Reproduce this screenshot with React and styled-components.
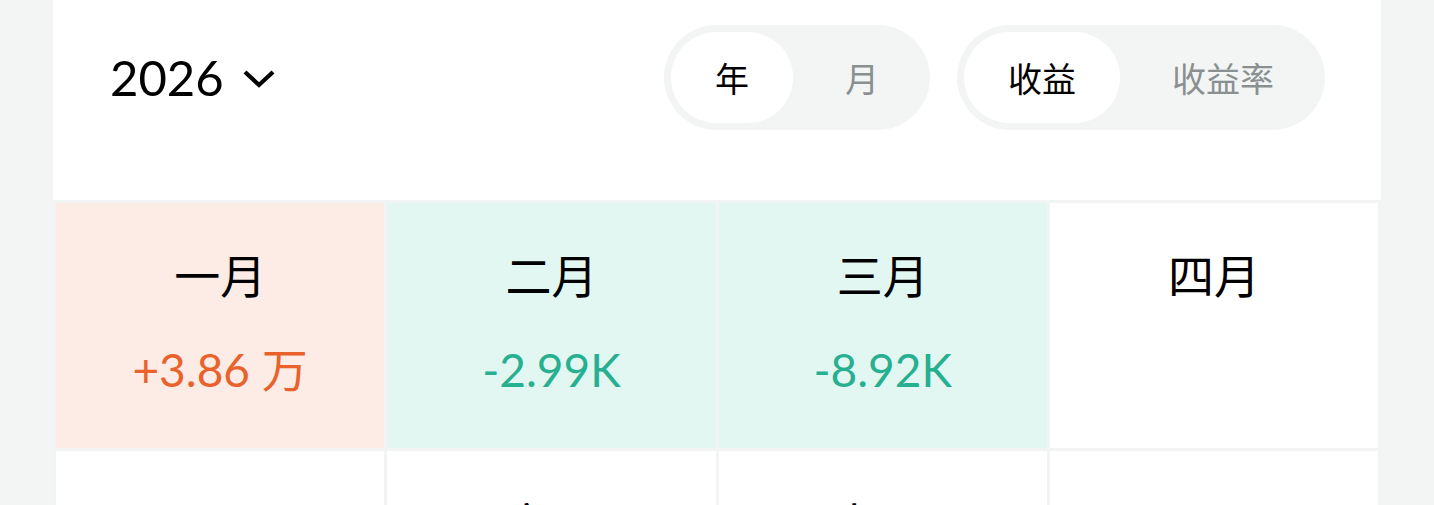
import React, { useState } from 'react'
import styled, { createGlobalStyle } from 'styled-components';

const months = [
  { name: '一月', value: '+3.86 万', tone: 'up' },
  { name: '二月', value: '-2.99K', tone: 'down' },
  { name: '三月', value: '-8.92K', tone: 'down' },
  { name: '四月' },
  { name: '五月' },
  { name: '六月' },
  { name: '七月' },
  { name: '八月' },
];

const ChevronDown = () => (
  <svg width="34" height="24" viewBox="0 0 34 24" fill="none">
    <path d="M3 5 L17 18 L31 5" stroke="#000" strokeWidth="4.2" strokeLinecap="butt" strokeLinejoin="miter" />
  </svg>
);

const Segmented = ({ options, active, onChange }) => (
  <Pill>
    {options.map((o) => (
      <Segment key={o} $active={o === active} onClick={() => onChange(o)}>
        {o}
      </Segment>
    ))}
  </Pill>
);

const App = () => {
  const [period, setPeriod] = useState('年');
  const [mode, setMode] = useState('收益');

  return (
    <Page>
      <GlobalStyle />
      <Card>
        <Header>
          <YearPicker>
            2026
            <ChevronDown />
          </YearPicker>
          <Toggles>
            <Segmented options={['年', '月']} active={period} onChange={setPeriod} />
            <Segmented options={['收益', '收益率']} active={mode} onChange={setMode} />
          </Toggles>
        </Header>
        <MonthGrid>
          {months.map((m) => (
            <MonthCell key={m.name} $tone={m.tone}>
              <MonthName>{m.name}</MonthName>
              {m.value && <MonthValue $tone={m.tone}>{m.value}</MonthValue>}
            </MonthCell>
          ))}
        </MonthGrid>
      </Card>
    </Page>
  )
}

export default App

const GlobalStyle = createGlobalStyle`
  body {
    margin: 0;
    background: #f3f5f4;
    font-family: Lato, "Noto Sans CJK SC", sans-serif;
  }
`

const Page = styled.div`
  padding: 0 53px;
  height: 505px;
  overflow: hidden;
`

const Card = styled.div`
  background: #fff;
  width: 1328px;
`

const Header = styled.div`
  display: flex;
  align-items: center;
  justify-content: space-between;
  padding: 25px 56px 70px 57px;
`

const YearPicker = styled.div`
  display: flex;
  align-items: center;
  gap: 18px;
  font-family: Lato, sans-serif;
  font-size: 49px;
  color: #000;
  line-height: 1;
  svg { margin-top: 2px; }
`

const Toggles = styled.div`
  display: flex;
  gap: 27px;
`

const Pill = styled.div`
  display: flex;
  gap: 8px;
  padding: 7px;
  height: 105px;
  box-sizing: border-box;
  border-radius: 53px;
  background: #f3f5f5;
`

const Segment = styled.button`
  all: unset;
  display: flex;
  align-items: center;
  padding: 0 44px;
  border-radius: 46px;
  font-family: "Noto Sans CJK SC", sans-serif;
  font-size: 34px;
  color: ${(p) => (p.$active ? '#000' : '#8a9090')};
  background: ${(p) => (p.$active ? '#fff' : 'transparent')};
`

const MonthGrid = styled.div`
  display: grid;
  grid-template-columns: repeat(4, 1fr);
  gap: 3px;
  padding: 3px;
  background: #f2f4f3;
`

const tones = {
  up: { bg: '#fdece5', fg: '#e9622b' },
  down: { bg: '#e3f7f2', fg: '#27b08f' },
};

const MonthCell = styled.div`
  height: 245px;
  display: flex;
  flex-direction: column;
  align-items: center;
  padding-top: 47px;
  box-sizing: border-box;
  gap: 51px;
  background: ${(p) => (p.$tone ? tones[p.$tone].bg : '#fff')};
`

const MonthName = styled.div`
  font-family: "Noto Sans CJK SC", sans-serif;
  font-size: 46px;
  line-height: 46px;
  color: #000;
`

const MonthValue = styled.div`
  font-family: Lato, "Noto Sans CJK SC", sans-serif;
  font-size: 46px;
  line-height: 46px;
  color: ${(p) => tones[p.$tone].fg};
`
